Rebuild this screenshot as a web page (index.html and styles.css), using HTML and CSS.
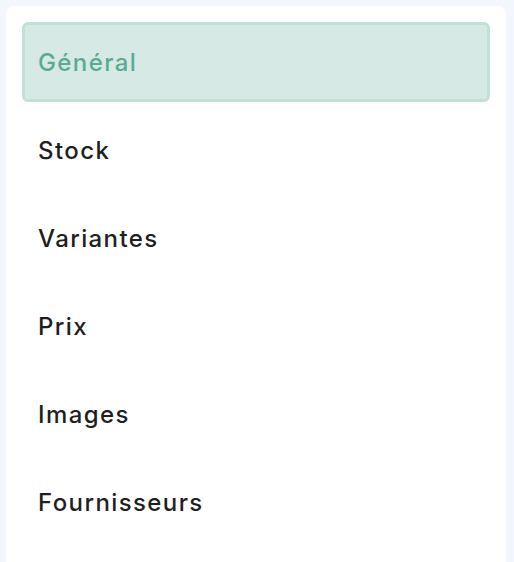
FILE: index.html
```html
<!DOCTYPE html>
<html lang="fr">
  <head>
    <meta charset="UTF-8" />
    <meta name="viewport" content="width=device-width, initial-scale=1" />
    <title>Produit</title>
    <link rel="stylesheet" href="styles.css">
  </head>
  <body>
    <nav class="sidebar">
      <a class="nav-item active" href="#general">Général</a>
      <a class="nav-item" href="#stock">Stock</a>
      <a class="nav-item" href="#variantes">Variantes</a>
      <a class="nav-item" href="#prix">Prix</a>
      <a class="nav-item" href="#images">Images</a>
      <a class="nav-item" href="#fournisseurs">Fournisseurs</a>
    </nav>
  </body>
</html>
```

FILE: styles.css
```css
html, body {
  height: 100%;
}

body {
  margin: 0;
  padding: 6px 8px 0 6px;
  box-sizing: border-box;
  background: #f3f6fd;
  font-family: "Inter", "Noto Sans", sans-serif;
  display: flex;
  overflow: hidden;
}

.sidebar {
  flex: 1;
  background: #ffffff;
  border-radius: 8px 8px 0 0;
  padding: 16px;
  display: flex;
  flex-direction: column;
  gap: 8px;
}

.nav-item {
  height: 80px;
  box-sizing: border-box;
  display: flex;
  align-items: center;
  padding: 0 13px;
  border: 3px solid transparent;
  border-radius: 6px;
  font-size: 24px;
  font-weight: 500;
  letter-spacing: 1.4px;
  color: #1f1f1f;
  text-decoration: none;
}

.nav-item.active {
  background: #d6e9e4;
  border-color: #c3e0d8;
  color: #5aab93;
}
```
